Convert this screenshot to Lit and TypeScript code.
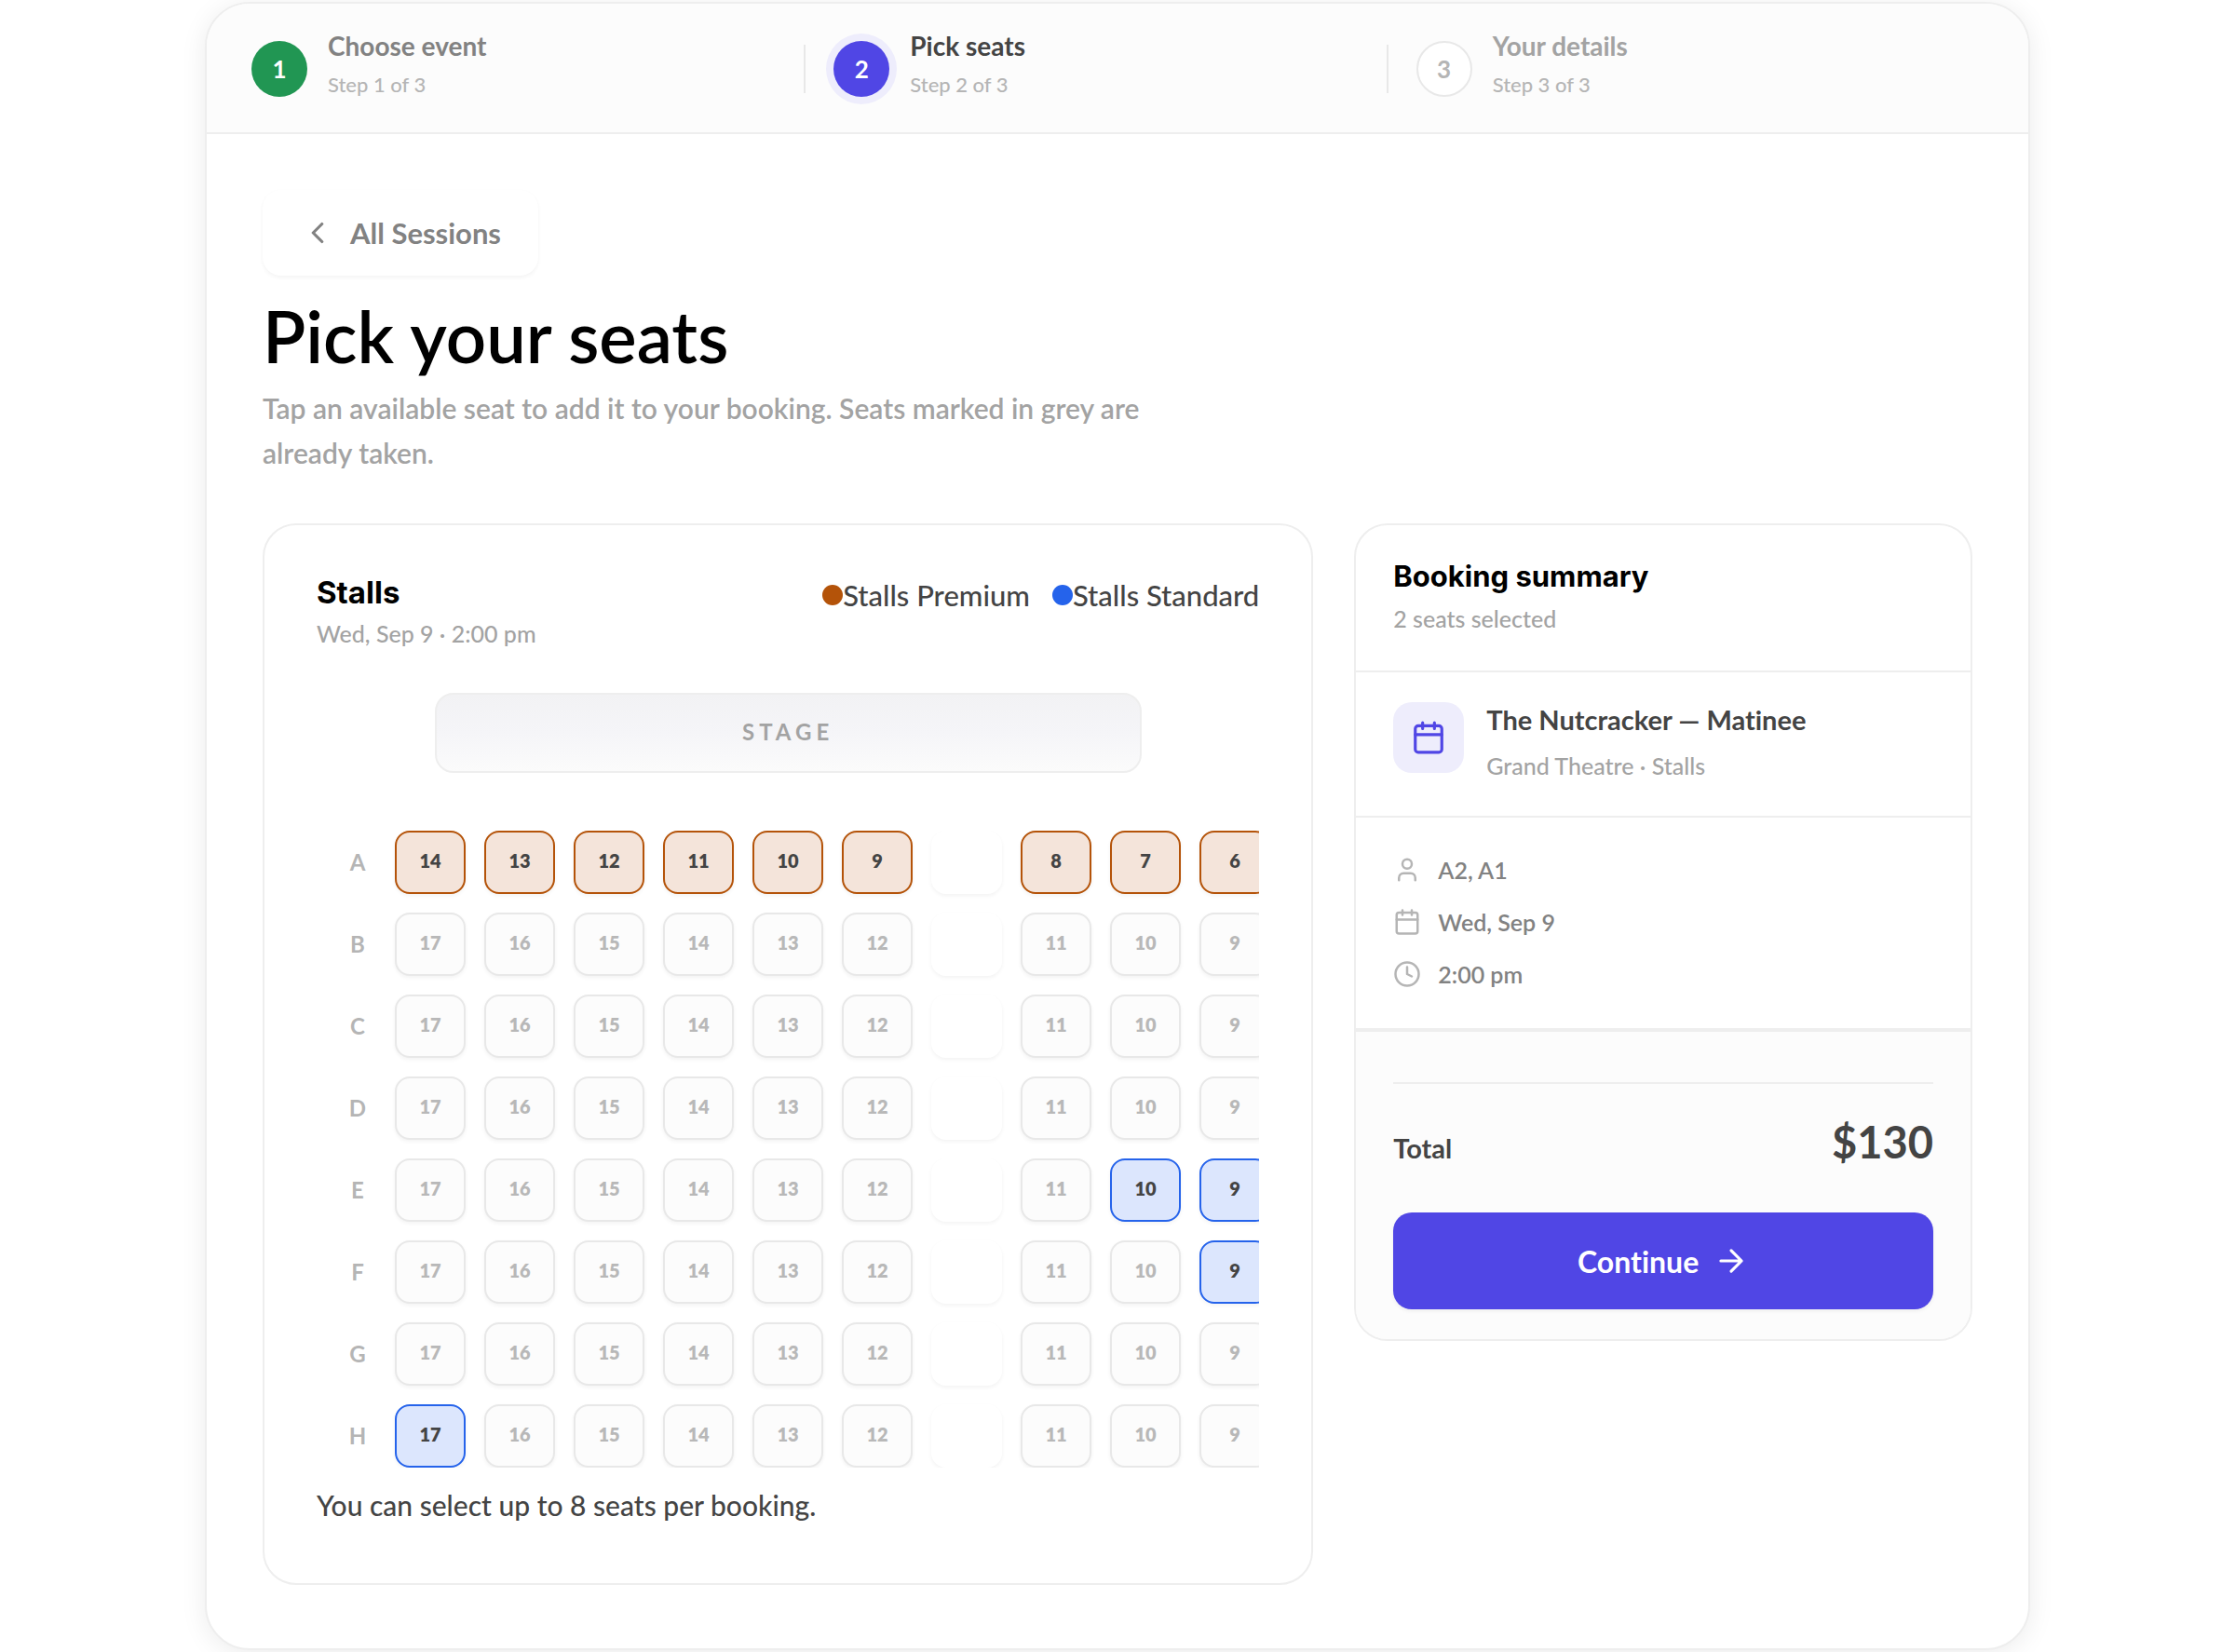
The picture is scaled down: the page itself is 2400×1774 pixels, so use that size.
import { LitElement, html, css, svg, nothing } from "lit";
import { customElement, property, state } from "lit/decorators.js";
import { classMap } from "lit/directives/class-map.js";

const ICONS = {
  calendar: svg`<rect x="3" y="4" width="18" height="18" rx="2" /><path d="M8 2v4M16 2v4M3 10h18" />`,
  user: svg`<circle cx="12" cy="7" r="4" /><path d="M19 21v-2a4 4 0 0 0-4-4H9a4 4 0 0 0-4 4v2" />`,
  clock: svg`<circle cx="12" cy="12" r="10" /><path d="M12 6v6l4 2" />`,
  back: svg`<path d="m15 18-6-6 6-6" />`,
  forward: svg`<path d="M5 12h14M12 5l7 7-7 7" />`,
};
type IconName = keyof typeof ICONS;

type Tier = "premium" | "standard" | "taken";
interface Seat {
  label: string;
  tier: Tier;
}
interface SeatRow {
  name: string;
  seats: (Seat | null)[];
}

/* Builds one row; null marks the aisle. */
const buildRow = (name: string, labels: (number | null)[], tier: Tier, open: number[] = []): SeatRow => ({
  name,
  seats: labels.map((n) =>
    n === null ? null : { label: String(n), tier: open.includes(n) ? "standard" : tier },
  ),
});

const FRONT = [14, 13, 12, 11, 10, 9, null, 8, 7, 6];
const REST = [17, 16, 15, 14, 13, 12, null, 11, 10, 9];

const ROWS: SeatRow[] = [
  buildRow("A", FRONT, "premium"),
  buildRow("B", REST, "taken"),
  buildRow("C", REST, "taken"),
  buildRow("D", REST, "taken"),
  buildRow("E", REST, "taken", [10, 9]),
  buildRow("F", REST, "taken", [9]),
  buildRow("G", REST, "taken"),
  buildRow("H", REST, "taken", [17]),
];

@customElement("ui-icon")
export class UiIcon extends LitElement {
  static styles = css`
    :host {
      display: block;
      flex: none;
      width: 38px;
      height: 38px;
    }
    .glyph {
      display: block;
      width: 100%;
      height: 100%;
      fill: none;
      stroke: currentColor;
      stroke-width: 2;
      stroke-linecap: round;
      stroke-linejoin: round;
    }
  `;
  @property() name: IconName = "calendar";
  render() {
    return html`<svg class="glyph" viewBox="0 0 24 24" aria-hidden="true">${ICONS[this.name]}</svg>`;
  }
}

@customElement("step-bar")
export class StepBar extends LitElement {
  static styles = css`
    :host {
      display: block;
    }
    .steps {
      display: grid;
      grid-template-columns: repeat(3, 1fr);
      margin: 0;
      padding: 28px 40px 26px;
      list-style: none;
      background: #fcfcfc;
      border-bottom: 2px solid #eeeeee;
    }
    .step {
      display: flex;
      align-items: center;
      gap: 22px;
      padding: 0 22px 0 8px;
    }
    .badge {
      display: grid;
      place-items: center;
      flex: none;
      box-sizing: border-box;
      width: 60px;
      height: 60px;
      border-radius: 50%;
      font-size: 26px;
      font-weight: 700;
    }
    .done .badge {
      background: #219653;
      color: #ffffff;
    }
    .current .badge {
      background: #5046e5;
      color: #ffffff;
      box-shadow: 0 0 0 8px #eeedfc;
    }
    .next .badge {
      background: #ffffff;
      border: 2px solid #e8e8e8;
      color: #b5b5b5;
    }
    .text {
      display: flex;
      flex: 1;
      flex-direction: column;
      gap: 10px;
      padding-bottom: 10px;
    }
    .name {
      font-size: 28px;
      line-height: 34px;
      font-weight: 700;
      color: #828282;
    }
    .current .name {
      color: #444444;
    }
    .next .name {
      color: #a3a3a3;
    }
    .count {
      font-size: 22px;
      line-height: 30px;
      font-weight: 500;
      color: #b5b5b5;
    }
    .divider {
      width: 2px;
      height: 52px;
      background: #e8e8e8;
    }
  `;
  private steps = [
    { name: "Choose event", status: "done" },
    { name: "Pick seats", status: "current" },
    { name: "Your details", status: "next" },
  ];
  render() {
    const total = this.steps.length;
    return html`<ol class="steps">
      ${this.steps.map(
        (s, i) => html`<li class="step ${s.status}">
          <span class="badge">${i + 1}</span>
          <span class="text">
            <span class="name">${s.name}</span>
            <span class="count">Step ${i + 1} of ${total}</span>
          </span>
          ${i < total - 1 ? html`<span class="divider"></span>` : nothing}
        </li>`,
      )}
    </ol>`;
  }
}

@customElement("seat-map")
export class SeatMap extends LitElement {
  static styles = css`
    :host {
      display: block;
      min-width: 0;
    }
    .panel {
      padding: 54px 56px 60px;
      background: #ffffff;
      border: 2px solid #eeeeee;
      border-radius: 36px;
    }
    .head {
      display: flex;
      justify-content: space-between;
      align-items: flex-start;
      gap: 24px;
      margin-bottom: 46px;
    }
    .title {
      margin: 0 0 8px;
      font-family: Inter, "Liberation Sans", sans-serif;
      font-size: 33px;
      line-height: 36px;
      font-weight: 700;
      color: #000000;
    }
    .when {
      margin: 0;
      font-size: 25px;
      line-height: 36px;
      font-weight: 500;
      color: #a3a3a3;
    }
    .legend {
      display: flex;
      gap: 24px;
      margin: 0;
      padding: 0;
      list-style: none;
      font-size: 31px;
      line-height: 42px;
      font-weight: 500;
    }
    .key {
      display: flex;
      align-items: center;
    }
    .dot {
      width: 22px;
      height: 22px;
      border-radius: 50%;
    }
    .dot.premium {
      background: #b45309;
    }
    .dot.standard {
      background: #2563eb;
    }
    .stage {
      display: grid;
      place-items: center;
      box-sizing: border-box;
      width: 75%;
      height: 86px;
      margin: 0 auto 62px;
      padding-bottom: 4px;
      border: 2px solid #eeeeee;
      border-radius: 20px;
      background: linear-gradient(#f2f2f4, #f5f5f8 50%, #fbfbfb);
      color: #a3a3a3;
      font-size: 24px;
      font-weight: 700;
      letter-spacing: 5px;
    }
    .scroller {
      overflow: hidden;
      padding: 0 0 0 24px;
    }
    .rows {
      display: flex;
      flex-direction: column;
      gap: 20px;
    }
    .row {
      display: flex;
      align-items: center;
      gap: 20px;
    }
    .row-name {
      flex: none;
      width: 40px;
      padding-bottom: 2px;
      text-align: center;
      font-size: 24px;
      font-weight: 700;
      color: #b5b5b5;
    }
    .seat,
    .aisle {
      flex: none;
      box-sizing: border-box;
      width: 76px;
      height: 68px;
      border: 2px solid transparent;
      border-radius: 16px;
      box-shadow: 0 2px 4px rgba(0, 0, 0, 0.05);
    }
    .seat {
      padding: 0 0 4px;
      font: inherit;
      font-size: 20px;
      font-weight: 800;
      color: #444444;
      cursor: pointer;
    }
    .seat.premium {
      background: #f4e4da;
      border-color: #b45309;
    }
    .seat.standard {
      background: #dce6fd;
      border-color: #2563eb;
    }
    .seat.taken {
      background: #fcfcfc;
      border-color: #e8e8e8;
      color: #b8b8b8;
      cursor: default;
    }
    .hint {
      margin: 16px 0 0;
      font-size: 30px;
      line-height: 48px;
      font-weight: 500;
    }
  `;
  render() {
    return html`<section class="panel">
      <div class="head">
        <div>
          <h2 class="title">Stalls</h2>
          <p class="when">Wed, Sep 9 · 2:00 pm</p>
        </div>
        <ul class="legend">
          <li class="key"><span class="dot premium"></span>Stalls Premium</li>
          <li class="key"><span class="dot standard"></span>Stalls Standard</li>
        </ul>
      </div>
      <div class="stage">STAGE</div>
      <div class="scroller">
        <div class="rows">
          ${ROWS.map(
            (row) => html`<div class="row">
              <span class="row-name">${row.name}</span>
              ${row.seats.map((seat) =>
                seat
                  ? html`<button
                      type="button"
                      class=${classMap({ seat: true, [seat.tier]: true })}
                      ?disabled=${seat.tier === "taken"}
                    >${seat.label}</button>`
                  : html`<span class="aisle"></span>`,
              )}
            </div>`,
          )}
        </div>
      </div>
      <p class="hint">You can select up to 8 seats per booking.</p>
    </section>`;
  }
}

@customElement("booking-summary")
export class BookingSummary extends LitElement {
  static styles = css`
    :host {
      display: block;
    }
    .panel {
      overflow: hidden;
      background: #ffffff;
      border: 2px solid #eeeeee;
      border-radius: 36px;
    }
    .head {
      padding: 36px 40px 38px;
      border-bottom: 2px solid #eeeeee;
    }
    .title {
      margin: 0 0 8px;
      font-family: Inter, "Liberation Sans", sans-serif;
      font-size: 31px;
      line-height: 38px;
      font-weight: 700;
      color: #000000;
    }
    .muted {
      margin: 0;
      font-size: 25px;
      line-height: 36px;
      font-weight: 500;
      color: #a3a3a3;
    }
    .event {
      display: flex;
      align-items: flex-start;
      gap: 24px;
      padding: 32px 40px 36px;
      border-bottom: 2px solid #eeeeee;
    }
    .tile {
      display: grid;
      place-items: center;
      flex: none;
      width: 76px;
      height: 76px;
      border-radius: 20px;
      background: #eeedfc;
      color: #5046e5;
    }
    .event-name {
      margin: 0 0 12px;
      font-size: 29px;
      line-height: 38px;
      font-weight: 700;
    }
    .facts {
      display: flex;
      flex-direction: column;
      gap: 20px;
      margin: 0;
      padding: 38px 40px 40px;
      list-style: none;
    }
    .fact {
      display: flex;
      align-items: center;
      gap: 18px;
      font-size: 25px;
      line-height: 36px;
      font-weight: 600;
      color: #828282;
    }
    .fact-icon {
      width: 30px;
      height: 30px;
      color: #b5b5b5;
    }
    .foot {
      padding: 54px 40px 32px;
      background: #fcfcfc;
      border-top: 4px solid #eeeeee;
    }
    .total {
      display: flex;
      justify-content: space-between;
      align-items: baseline;
      padding: 32px 0 39px;
      border-top: 2px solid #eeeeee;
      line-height: 60px;
      font-weight: 700;
    }
    .total-label {
      font-size: 29px;
    }
    .total-value {
      font-size: 47px;
    }
    .continue {
      display: flex;
      justify-content: center;
      align-items: center;
      gap: 16px;
      width: 100%;
      height: 104px;
      padding: 0;
      border: 0;
      border-radius: 20px;
      background: #5046e5;
      box-shadow: 0 2px 4px rgba(0, 0, 0, 0.06);
      color: #ffffff;
      font: inherit;
      font-size: 32px;
      font-weight: 700;
      font-variant-ligatures: none;
      cursor: pointer;
    }
  `;
  @state() private facts: { icon: IconName; text: string }[] = [
    { icon: "user", text: "A2, A1" },
    { icon: "calendar", text: "Wed, Sep 9" },
    { icon: "clock", text: "2:00 pm" },
  ];
  render() {
    return html`<aside class="panel">
      <div class="head">
        <h2 class="title">Booking summary</h2>
        <p class="muted">2 seats selected</p>
      </div>
      <div class="event">
        <span class="tile"><ui-icon name="calendar"></ui-icon></span>
        <div>
          <h3 class="event-name">The Nutcracker — Matinee</h3>
          <p class="muted">Grand Theatre · Stalls</p>
        </div>
      </div>
      <ul class="facts">
        ${this.facts.map(
          (f) => html`<li class="fact"><ui-icon class="fact-icon" name=${f.icon}></ui-icon>${f.text}</li>`,
        )}
      </ul>
      <div class="foot">
        <div class="total">
          <span class="total-label">Total</span>
          <span class="total-value">$130</span>
        </div>
        <button type="button" class="continue">Continue<ui-icon name="forward"></ui-icon></button>
      </div>
    </aside>`;
  }
}

@customElement("app-root")
export class AppRoot extends LitElement {
  static styles = css`
    :host {
      display: block;
      padding: 2px 0;
      background: #ffffff;
      color: #444444;
      font-family: Lato, "Liberation Sans", sans-serif;
      font-variant-ligatures: none;
    }
    .shell {
      box-sizing: border-box;
      max-width: 1960px;
      margin: 0 auto;
      overflow: hidden;
      background: #ffffff;
      border: 2px solid #eeeeee;
      border-radius: 48px;
      box-shadow: 0 4px 28px rgba(0, 0, 0, 0.08);
    }
    .body {
      padding: 60px 60px 68px;
    }
    .back {
      display: flex;
      align-items: center;
      gap: 16px;
      height: 92px;
      padding: 0 38px;
      border: 2px solid transparent;
      border-radius: 20px;
      background: #ffffff;
      box-shadow: 0 2px 4px rgba(0, 0, 0, 0.05);
      color: #828282;
      font: inherit;
      font-size: 31px;
      font-weight: 700;
      cursor: pointer;
    }
    .heading {
      margin: 20px 0 8px;
      font-size: 76px;
      line-height: 90px;
      font-weight: 600;
      color: #000000;
    }
    .lead {
      max-width: 1000px;
      margin: 0 0 52px;
      font-size: 30px;
      line-height: 48px;
      font-weight: 600;
      color: #a3a3a3;
    }
    .columns {
      display: grid;
      grid-template-columns: minmax(0, 17fr) minmax(0, 10fr);
      align-items: start;
      gap: 44px;
    }
  `;
  render() {
    return html`<main class="shell">
      <step-bar></step-bar>
      <div class="body">
        <button type="button" class="back"><ui-icon name="back"></ui-icon>All Sessions</button>
        <h1 class="heading">Pick your seats</h1>
        <p class="lead">
          Tap an available seat to add it to your booking. Seats marked in grey are already taken.
        </p>
        <div class="columns">
          <seat-map></seat-map>
          <booking-summary></booking-summary>
        </div>
      </div>
    </main>`;
  }
}
